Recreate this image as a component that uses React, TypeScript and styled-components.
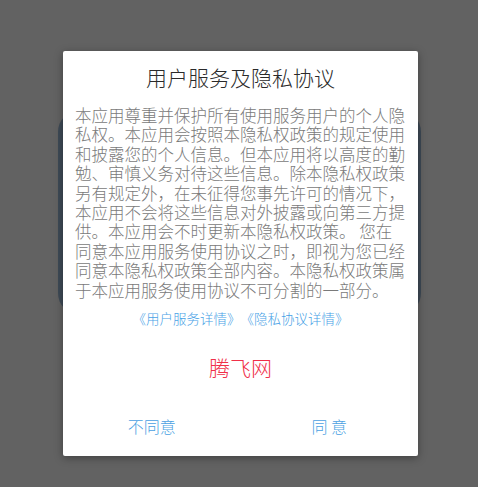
import React from "react";
import styled, { createGlobalStyle } from "styled-components";

const GlobalStyle = createGlobalStyle`
  html, body {
    margin: 0;
    padding: 0;
    background: #626262;
  }
  body {
    font-family: "Noto Sans CJK SC", "Noto Sans", sans-serif;
  }
`;

const Page = styled.div`
  width: 478px;
  height: 487px;
  box-sizing: border-box;
  padding-top: 51px;
  display: flex;
  justify-content: center;
  align-items: flex-start;
  background: #626262;
`;

const Stack = styled.div`
  display: grid;
  width: 355px;
  margin-left: 3px;
`;

const BehindCard = styled.div`
  grid-area: 1 / 1;
  align-self: start;
  margin: 59px -3px 0 -5px;
  height: 205px;
  border-radius: 22px;
  background: #3e4a56;
`;

const Dialog = styled.div`
  grid-area: 1 / 1;
  position: relative;
  z-index: 1;
  height: 405px;
  box-sizing: border-box;
  background: #ffffff;
  border-radius: 2px;
  box-shadow: 0 2px 8px rgba(0, 0, 0, 0.35);
  display: flex;
  flex-direction: column;
  align-items: stretch;
  padding: 13px 0 6px;
`;

const Title = styled.h1`
  margin: 0;
  font-size: 21px;
  line-height: 26px;
  font-weight: 300;
  color: #2a2a2a;
  text-align: center;
`;

const Body = styled.div`
  margin: 16px 12px 0;
  font-size: 16.5px;
  line-height: 19.4px;
  font-weight: 300;
  color: #7a7a7a;
`;

const Line = styled.div`
  white-space: nowrap;
`;

const Links = styled.div`
  margin-top: 9px;
  text-align: center;
  font-size: 13.5px;
  line-height: 18px;
  font-weight: 300;
  text-spacing-trim: space-all;
  color: #48a2e6;
`;

const LinkText = styled.span`
  cursor: pointer;
`;

const Brand = styled.div`
  margin-top: 27px;
  text-align: center;
  font-size: 21px;
  line-height: 26px;
  font-weight: 300;
  color: #f0304a;
`;

const Actions = styled.div`
  margin-top: auto;
  display: flex;
`;

const ActionButton = styled.button`
  flex: 1;
  height: 48px;
  border: none;
  background: transparent;
  font-family: "Noto Sans CJK SC", "Noto Sans", sans-serif;
  font-size: 16px;
  font-weight: 300;
  color: #4a9fe2;
  padding: 0;
  cursor: pointer;
`;

const lines = [
  "本应用尊重并保护所有使用服务用户的个人隐",
  "私权。本应用会按照本隐私权政策的规定使用",
  "和披露您的个人信息。但本应用将以高度的勤",
  "勉、审慎义务对待这些信息。除本隐私权政策",
  "另有规定外，在未征得您事先许可的情况下，",
  "本应用不会将这些信息对外披露或向第三方提",
  "供。本应用会不时更新本隐私权政策。 您在",
  "同意本应用服务使用协议之时，即视为您已经",
  "同意本隐私权政策全部内容。本隐私权政策属",
  "于本应用服务使用协议不可分割的一部分。",
];

export default function App() {
  return (
    <>
      <GlobalStyle />
      <Page>
        <Stack>
          <BehindCard />
          <Dialog>
            <Title>用户服务及隐私协议</Title>
            <Body>
              {lines.map((l, i) => (
                <Line key={i}>{l}</Line>
              ))}
            </Body>
            <Links>
              <LinkText>《用户服务详情》</LinkText>
              <LinkText>《隐私协议详情》</LinkText>
            </Links>
            <Brand>腾飞网</Brand>
            <Actions>
              <ActionButton>不同意</ActionButton>
              <ActionButton>同 意</ActionButton>
            </Actions>
          </Dialog>
        </Stack>
      </Page>
    </>
  );
}
